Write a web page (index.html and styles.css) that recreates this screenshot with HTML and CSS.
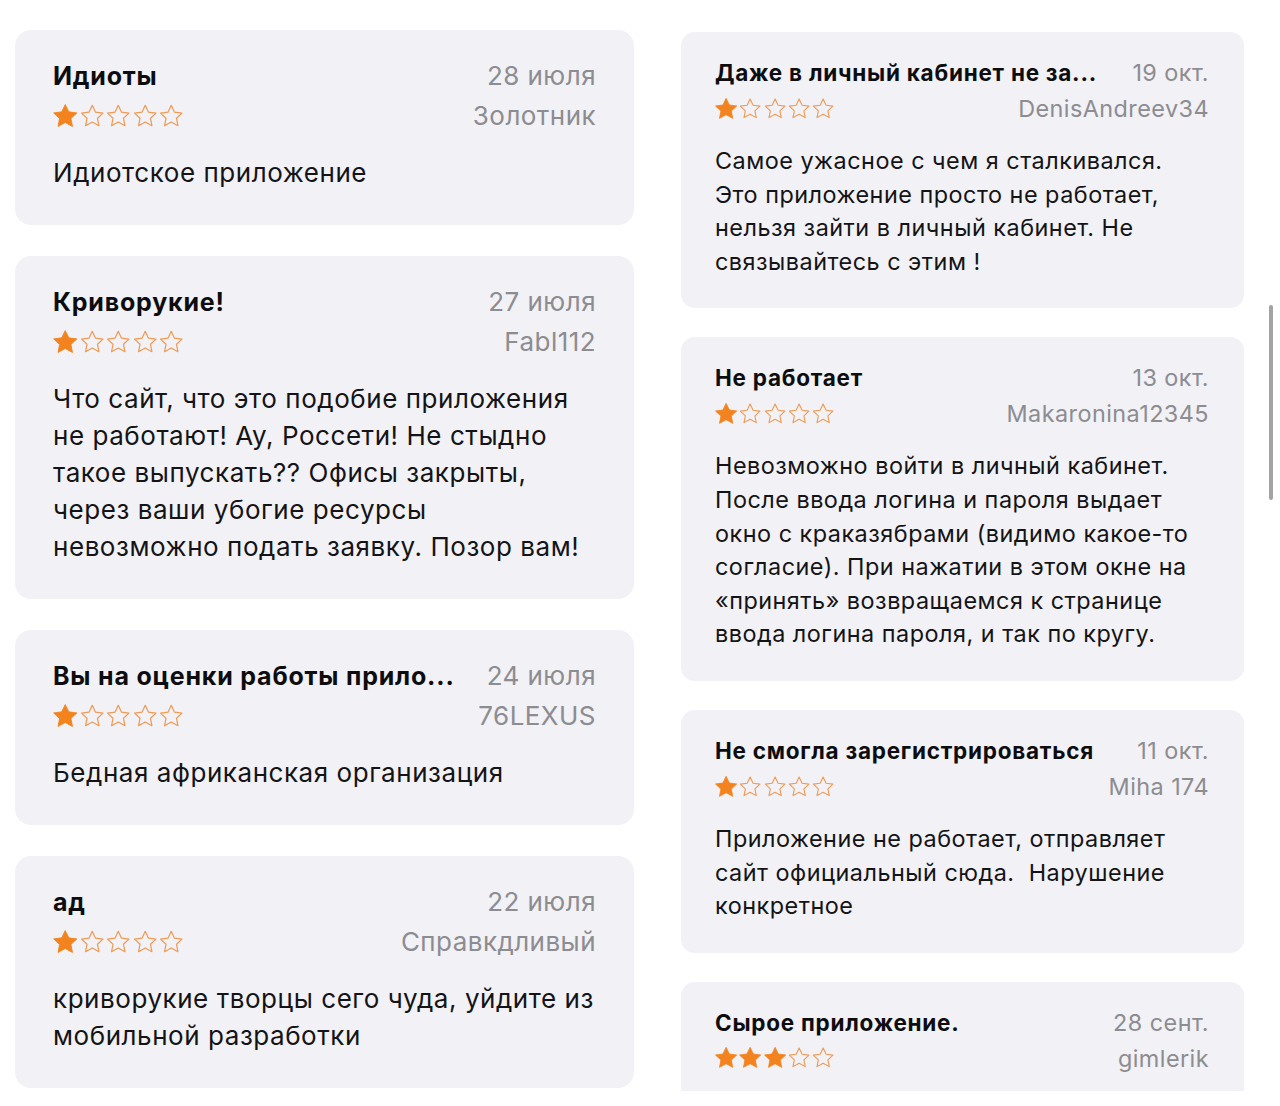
FILE: index.html
```html
<!DOCTYPE html>
<html lang="ru">
<head>
<meta charset="utf-8">
<title>Отзывы</title>
<link rel="stylesheet" href="styles.css">
</head>
<body>
<svg class="defs" width="0" height="0" aria-hidden="true">
  <defs>
    <symbol id="star-full" viewBox="0 0 24 24">
      <path d="M12 1.2l3.2 6.6 7.3.95-5.35 5.05 1.4 7.2L12 17.45 5.45 21l1.4-7.2L1.5 8.75l7.3-.95z" fill="#f3831e" stroke="#f3831e" stroke-width="0.8" stroke-linejoin="round"/>
    </symbol>
    <symbol id="star-empty" viewBox="0 0 24 24">
      <path d="M12 1.9l2.95 6.15 6.75.9-4.95 4.65 1.3 6.7L12 17 5.950 20.3l1.3-6.7L2.3 8.95l6.75-.9z" fill="none" stroke="#f09a55" stroke-width="1.1" stroke-linejoin="round"/>
    </symbol>
  </defs>
</svg>
<div class="page">
  <div class="col col-left">
    <div class="card">
      <div class="row"><span class="title">Идиоты</span><span class="meta">28 июля</span></div>
      <div class="row"><span class="stars"><svg class="star"><use href="#star-full"/></svg><svg class="star"><use href="#star-empty"/></svg><svg class="star"><use href="#star-empty"/></svg><svg class="star"><use href="#star-empty"/></svg><svg class="star"><use href="#star-empty"/></svg></span><span class="meta">Золотник</span></div>
      <p class="body">Идиотское приложение</p>
    </div>
    <div class="card">
      <div class="row"><span class="title">Криворукие!</span><span class="meta">27 июля</span></div>
      <div class="row"><span class="stars"><svg class="star"><use href="#star-full"/></svg><svg class="star"><use href="#star-empty"/></svg><svg class="star"><use href="#star-empty"/></svg><svg class="star"><use href="#star-empty"/></svg><svg class="star"><use href="#star-empty"/></svg></span><span class="meta">Fabl112</span></div>
      <p class="body">Что сайт, что это подобие приложения<br>не работают! Ау, Россети! Не стыдно<br>такое выпускать?? Офисы закрыты,<br>через ваши убогие ресурсы<br>невозможно подать заявку. Позор вам!</p>
    </div>
    <div class="card">
      <div class="row"><span class="title">Вы на оценки работы прило...</span><span class="meta">24 июля</span></div>
      <div class="row"><span class="stars"><svg class="star"><use href="#star-full"/></svg><svg class="star"><use href="#star-empty"/></svg><svg class="star"><use href="#star-empty"/></svg><svg class="star"><use href="#star-empty"/></svg><svg class="star"><use href="#star-empty"/></svg></span><span class="meta">76LEXUS</span></div>
      <p class="body">Бедная африканская организация</p>
    </div>
    <div class="card">
      <div class="row"><span class="title">ад</span><span class="meta">22 июля</span></div>
      <div class="row"><span class="stars"><svg class="star"><use href="#star-full"/></svg><svg class="star"><use href="#star-empty"/></svg><svg class="star"><use href="#star-empty"/></svg><svg class="star"><use href="#star-empty"/></svg><svg class="star"><use href="#star-empty"/></svg></span><span class="meta">Справкдливый</span></div>
      <p class="body">криворукие творцы сего чуда, уйдите из<br>мобильной разработки</p>
    </div>
  </div>
  <div class="col col-right">
    <div class="card">
      <div class="row"><span class="title">Даже в личный кабинет не за...</span><span class="meta">19 окт.</span></div>
      <div class="row"><span class="stars"><svg class="star"><use href="#star-full"/></svg><svg class="star"><use href="#star-empty"/></svg><svg class="star"><use href="#star-empty"/></svg><svg class="star"><use href="#star-empty"/></svg><svg class="star"><use href="#star-empty"/></svg></span><span class="meta">DenisAndreev34</span></div>
      <p class="body">Самое ужасное с чем я сталкивался.<br>Это приложение просто не работает,<br>нельзя зайти в личный кабинет. Не<br>связывайтесь с этим !</p>
    </div>
    <div class="card">
      <div class="row"><span class="title">Не работает</span><span class="meta">13 окт.</span></div>
      <div class="row"><span class="stars"><svg class="star"><use href="#star-full"/></svg><svg class="star"><use href="#star-empty"/></svg><svg class="star"><use href="#star-empty"/></svg><svg class="star"><use href="#star-empty"/></svg><svg class="star"><use href="#star-empty"/></svg></span><span class="meta">Makaronina12345</span></div>
      <p class="body">Невозможно войти в личный кабинет.<br>После ввода логина и пароля выдает<br>окно с краказябрами (видимо какое-то<br>согласие). При нажатии в этом окне на<br>«принять» возвращаемся к странице<br>ввода логина пароля, и так по кругу.</p>
    </div>
    <div class="card">
      <div class="row"><span class="title">Не смогла зарегистрироваться</span><span class="meta">11 окт.</span></div>
      <div class="row"><span class="stars"><svg class="star"><use href="#star-full"/></svg><svg class="star"><use href="#star-empty"/></svg><svg class="star"><use href="#star-empty"/></svg><svg class="star"><use href="#star-empty"/></svg><svg class="star"><use href="#star-empty"/></svg></span><span class="meta">Miha 174</span></div>
      <p class="body">Приложение не работает, отправляет<br>сайт официальный сюда.&nbsp; Нарушение<br>конкретное</p>
    </div>
    <div class="card">
      <div class="row"><span class="title">Сырое приложение.</span><span class="meta">28 сент.</span></div>
      <div class="row"><span class="stars"><svg class="star"><use href="#star-full"/></svg><svg class="star"><use href="#star-full"/></svg><svg class="star"><use href="#star-full"/></svg><svg class="star"><use href="#star-empty"/></svg><svg class="star"><use href="#star-empty"/></svg></span><span class="meta">gimlerik</span></div>
      <p class="body">&nbsp;</p>
    </div>
  </div>
</div>
<div class="scrollbar"></div>
</body>
</html>
```

FILE: styles.css
```css
html, body {
  margin: 0;
  padding: 0;
  background: #ffffff;
}

body {
  font-family: "Inter", "Liberation Sans", Arial, sans-serif;
  color: #111113;
  width: 1280px;
  height: 1106px;
  overflow: hidden;
  position: relative;
}

.defs {
  position: absolute;
  width: 0;
  height: 0;
}

.page {
  display: flex;
  align-items: flex-start;
  padding-left: 15px;
  gap: 47px;
}

.col {
  display: flex;
  flex-direction: column;
}

.card {
  background: #f1f1f6;
}

.row {
  display: flex;
  justify-content: space-between;
  align-items: center;
}

.title {
  font-weight: 650;
  white-space: nowrap;
  overflow: hidden;
  color: #0d0d0f;
}

.meta {
  color: #8c8c91;
  white-space: nowrap;
  flex-shrink: 0;
}

.stars {
  display: flex;
  margin-left: -1px;
}

.body {
  margin: 0;
  color: #141416;
}

/* left column */
.col-left {
  width: 619px;
  padding-top: 30px;
  gap: 31px;
}

.col-left .card {
  border-radius: 16px;
  padding: 26px 38px 34px 38px;
}

.col-left .row {
  height: 40px;
  line-height: 40px;
}

.col-left .title {
  font-size: 25px;
  letter-spacing: 0.8px;
}

.col-left .meta {
  font-size: 26px;
  letter-spacing: 0.45px;
  margin-left: 25px;
}

.col-left .star {
  width: 26.5px;
  height: 27px;
}

.col-left .body {
  margin-top: 18px;
  font-size: 26px;
  letter-spacing: 0.55px;
  line-height: 37px;
}

/* right column */
.col-right {
  width: 563px;
  height: 1059px;
  padding-top: 32px;
  gap: 29px;
  overflow: hidden;
}

.col-right .card {
  border-radius: 14px;
  padding: 23px 35px 30px 34px;
  flex-shrink: 0;
}

.col-right .row {
  height: 36px;
  line-height: 36px;
}

.col-right .title {
  font-size: 22.5px;
  letter-spacing: 0.75px;
}

.col-right .meta {
  font-size: 23.4px;
  letter-spacing: 0.45px;
  margin-left: 24px;
}

.col-right .star {
  width: 24.25px;
  height: 24.5px;
}

.col-right .body {
  margin-top: 17px;
  font-size: 23.4px;
  letter-spacing: 0.5px;
  line-height: 33.6px;
}

.scrollbar {
  position: absolute;
  left: 1269px;
  top: 305px;
  width: 4px;
  height: 195px;
  border-radius: 2px;
  background: #a3a3a3;
}
```
